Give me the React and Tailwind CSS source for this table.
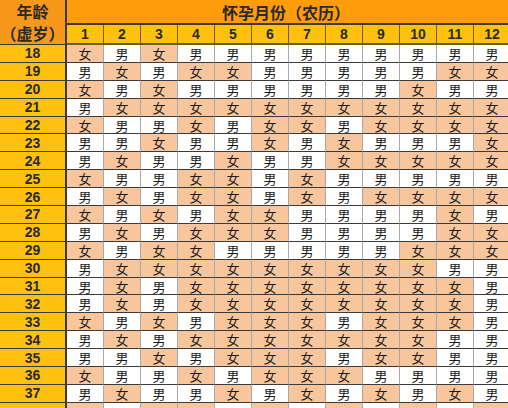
import React from "react";

const rows = {
  18: "女男女男男男男男男男男男",
  19: "男女男女女男男男男男女女",
  20: "女男女男男男男男男女男男",
  21: "男女女女女女女女女女女女",
  22: "女男男女男女女男女女女女",
  23: "男男女男男女男女男男男女",
  24: "男女男男女男男女女女女女",
  25: "女男男女女男女男男男男男",
  26: "男女男女女男女男女女女女",
  27: "女男女男女女男男男男女男",
  28: "男女男女女女男男男男女女",
  29: "女男女女男男男男男女女女",
  30: "男女女女女女女女女女男男",
  31: "男女男女女女女女女女女男",
  32: "男女男女女女女女女女女男",
  33: "女男女男女女女男女女女男",
  34: "男女男女女女女女女女男男",
  35: "男男女男女女女男女女男男",
  36: "女男男女男女女女男男男男",
  37: "男女男男女男女男女男女男",
};

// next row only peeks in at the bottom edge
const peek = "女男女女男女男女男女男女";

const months = [1, 2, 3, 4, 5, 6, 7, 8, 9, 10, 11, 12];

export default function App() {
  return (
    <div className="w-[508px] h-[408px] overflow-hidden bg-white">
      <div
        className="grid w-[511px] grid-cols-[67px_repeat(12,37px)] grid-rows-[25px_20px] auto-rows-[17.9px]"
        style={{ fontFamily: '"Noto Sans CJK SC", "Noto Sans", sans-serif' }}
      >
        {/* header */}
        <div className="row-span-2 flex flex-col items-center justify-center bg-[#f7981c] border-r-2 border-b border-[#3a3a3a] text-[16px] font-bold leading-[22px] text-[#2a2a2a]">
          <span>年龄</span>
          <span>（虚岁）</span>
        </div>
        <div className="col-span-12 flex items-center justify-center bg-[#ff9c0c] border-b-2 border-[#3a3a3a] text-[16px] font-bold leading-none text-[#2a2a2a] pr-[6px]">
          怀孕月份（农历）
        </div>
        {months.map((m) => (
          <div
            key={m}
            className="flex items-center justify-center bg-[#ffc10f] border-r border-b-2 border-[#6b5a2a] text-[14px] font-bold leading-none text-[#2a2a2a]"
            style={{ fontFamily: '"Liberation Sans", Arial, sans-serif' }}
          >
            {m}
          </div>
        ))}

        {/* body */}
        {Object.entries(rows).map(([age, line]) => (
          <React.Fragment key={age}>
            <div
              className="flex items-center justify-center bg-[#ffc10f] border-r-2 border-b border-[#3a3a3a] text-[14px] font-bold leading-none text-[#2a2a2a]"
              style={{ fontFamily: '"Liberation Sans", Arial, sans-serif' }}
            >
              {age}
            </div>
            {line.split("").map((g, i) => (
              <div
                key={i}
                className={
                  "flex items-center justify-center border-r border-r-[#a8a8a8] border-b border-b-[#3a3a3a] text-[13px] leading-none text-[#1a1a1a] " +
                  (g === "女" ? "bg-[#f8c69c]" : "bg-white")
                }
              >
                {g}
              </div>
            ))}
          </React.Fragment>
        ))}
        <div className="bg-[#ffc10f] border-r-2 border-[#3a3a3a]" />
        {peek.split("").map((g, i) => (
          <div
            key={i}
            className={
              "border-r border-r-[#a8a8a8] " +
              (g === "女" ? "bg-[#f8c69c]" : "bg-white")
            }
          />
        ))}
      </div>
    </div>
  );
}
